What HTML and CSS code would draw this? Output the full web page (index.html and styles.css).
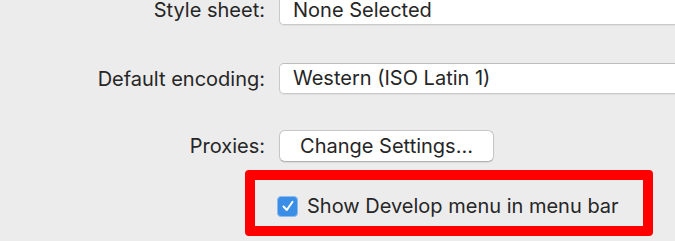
FILE: index.html
```html
<!DOCTYPE html>
<html>
<head>
<meta charset="utf-8">
<link rel="stylesheet" href="styles.css">
</head>
<body>
<div class="prefs">
  <div class="row row-first">
    <div class="label">Style sheet:</div>
    <div class="field field-top">None Selected</div>
  </div>
  <div class="row row-second">
    <div class="label">Default encoding:</div>
    <div class="field">Western (ISO Latin 1)</div>
  </div>
  <div class="row row-third">
    <div class="label">Proxies:</div>
    <div class="button">Change Settings…</div>
  </div>
  <div class="highlight">
    <span class="checkbox">
      <svg width="14" height="14" viewBox="0 0 14 14"><path d="M2.5 7.5 L5.8 11 L11.5 2.8" fill="none" stroke="#fff" stroke-width="2" stroke-linecap="round" stroke-linejoin="round"/></svg>
    </span>
    <span class="check-label">Show Develop menu in menu bar</span>
  </div>
</div>
</body>
</html>
```

FILE: styles.css
```css
html, body {
  margin: 0;
  padding: 0;
  background: #ececec;
  width: 675px;
  height: 241px;
  overflow: hidden;
}
body {
  font-family: "Inter", "Liberation Sans", sans-serif;
  font-size: 20px;
  color: #262626;
}
.prefs {
  display: flex;
  flex-direction: column;
}
.row {
  display: grid;
  grid-template-columns: 265px auto;
  column-gap: 14px;
  align-items: center;
}
.row-first {
  align-items: start;
}
.row-first .label {
  line-height: 20px;
}
.row-second { margin-top: 38px; }
.row-third { margin-top: 36px; }
.label {
  text-align: right;
  white-space: nowrap;
}
.field {
  width: 440px;
  height: 31px;
  box-sizing: border-box;
  background: #fff;
  border: 1px solid #c9c9c9;
  border-top-color: #bdbdbd;
  border-radius: 5px;
  padding-left: 13px;
  line-height: 29px;
  white-space: nowrap;
  box-shadow: 0 1px 1px rgba(0,0,0,0.06);
}
.field-top {
  height: 25px;
  border-top: none;
  border-radius: 0 0 5px 5px;
  line-height: 20px;
}
.button {
  width: 215px;
  height: 32px;
  box-sizing: border-box;
  background: #fff;
  border: 1px solid #c6c6c6;
  border-bottom-color: #b3b3b3;
  border-radius: 6px;
  text-align: center;
  line-height: 30px;
  white-space: nowrap;
  box-shadow: 0 1px 1px rgba(0,0,0,0.08);
}
.highlight {
  margin-top: 8px;
  margin-left: 245px;
  width: 408px;
  height: 66px;
  box-sizing: border-box;
  border: 10px solid #ff0000;
  border-radius: 4px;
  display: flex;
  align-items: center;
  padding-left: 22px;
  padding-top: 6px;
}
.checkbox {
  width: 21px;
  height: 21px;
  box-sizing: border-box;
  background: #3b8ee6;
  border: 1px solid #8dbbef;
  border-radius: 4px;
  display: flex;
  align-items: center;
  justify-content: center;
  margin-right: 9px;
}
.check-label {
  white-space: nowrap;
}
```
